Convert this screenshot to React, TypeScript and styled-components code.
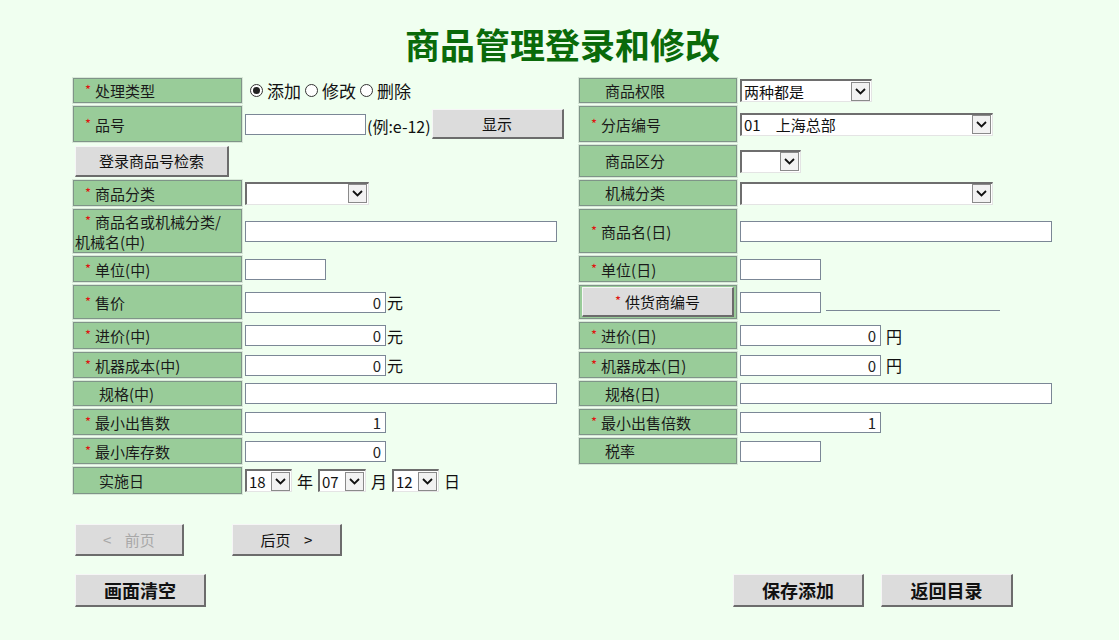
import React from 'react';
import styled, { createGlobalStyle } from 'styled-components';

const GlobalStyle = createGlobalStyle`
  html, body {
    margin: 0;
    padding: 0;
    background: #f0fff0;
  }
  body {
    font-family: "Noto Sans CJK SC", "Liberation Sans", sans-serif;
    font-size: 14px;
    color: #111;
  }
`;

const Page = styled.div`
  width: 1119px;
  height: 640px;
  overflow: hidden;
`;

const Title = styled.h1`
  margin: 22px 0 0;
  height: 50px;
  line-height: 44px;
  text-align: center;
  font-size: 35px;
  font-weight: 700;
  color: #0a6a0a;
  padding-left: 6px;
`;

const FormGrid = styled.div`
  margin: 6px 0 0 73px;
  display: grid;
  grid-template-columns: 169px 331px 158px 313px;
  grid-template-rows: 25px 36px 32px 26px 44px 26px 34px 27px 26px 25px 26px 26px 27px;
  gap: 3px;
`;

const LabelCell = styled.div<{ $plain?: boolean }>`
  box-sizing: border-box;
  background: #99cc99;
  border: 1px solid #7f9488;
  box-shadow: 0 0 0 1px #d8e8d8;
  display: flex;
  align-items: center;
  padding: 0 2px 0 1px;
  line-height: 20px;
  font-size: 15px;
  color: #1a1a1a;

  & > span.txt {
    text-indent: ${(p) => (p.$plain ? '24px' : '10px')};
  }
`;

const Star = styled.span`
  color: #e01010;
  font-size: 13px;
  margin-right: 4px;
  vertical-align: 2px;
  text-indent: 0;
`;

const FieldCell = styled.div`
  display: flex;
  align-items: center;
  font-size: 16px;
`;

const ButtonCell = styled.div`
  display: flex;
  align-items: center;
  padding-left: 2px;
`;

const PressCell = styled(LabelCell)`
  padding: 2px;
`;

const TextInput = styled.input<{ $w: number; $right?: boolean }>`
  box-sizing: border-box;
  width: ${(p) => p.$w}px;
  height: 21px;
  border: 1px solid #7b8796;
  background: #fff;
  padding: 0 4px;
  margin: 0;
  font-family: inherit;
  font-size: 15px;
  text-align: ${(p) => (p.$right ? 'right' : 'left')};
  color: #222;
  outline: none;
`;

const Unit = styled.span<{ $gap?: number }>`
  margin-left: ${(p) => p.$gap ?? 1}px;
  font-size: 16px;
`;

const Hint = styled.span`
  margin: 4px 1px 0 1px;
  font-size: 16px;
`;

const Underline = styled.span`
  width: 174px;
  height: 1px;
  background: #7b8796;
  margin: 16px 0 0 5px;
`;

const Button = styled.button<{ $w: number; $h?: number; $bold?: boolean }>`
  box-sizing: border-box;
  width: ${(p) => p.$w}px;
  height: ${(p) => p.$h ?? 31}px;
  background: #dcdcdc;
  border-top: 1px solid #f6f6f6;
  border-left: 1px solid #f6f6f6;
  border-right: 2px solid #6c6c6c;
  border-bottom: 2px solid #6c6c6c;
  padding: 0;
  margin: 0;
  font-family: inherit;
  font-size: ${(p) => (p.$bold ? '18px' : '15px')};
  font-weight: ${(p) => (p.$bold ? 700 : 400)};
  color: #111;
  cursor: pointer;

  &:disabled {
    color: #a8a8a8;
    cursor: default;
  }
`;

const RadioGroup = styled.div`
  display: flex;
  align-items: center;
  padding-left: 5px;
  font-size: 17px;
`;

const RadioItem = styled.label`
  display: flex;
  align-items: center;
  margin-right: 4px;
`;

const RadioDot = styled.span<{ $on?: boolean }>`
  box-sizing: border-box;
  width: 13px;
  height: 13px;
  border-radius: 50%;
  border: 1px solid #333;
  background: #fff;
  margin-right: 4px;
  display: flex;
  align-items: center;
  justify-content: center;

  &::after {
    content: '';
    width: 7px;
    height: 7px;
    border-radius: 50%;
    background: ${(p) => (p.$on ? '#222' : 'transparent')};
  }
`;

const SelectBox = styled.div<{ $w: number }>`
  box-sizing: border-box;
  width: ${(p) => p.$w}px;
  height: 23px;
  border-top: 2px solid #6e6e6e;
  border-left: 2px solid #6e6e6e;
  border-right: 1px solid #e4e4e4;
  border-bottom: 1px solid #e4e4e4;
  background: #fff;
  display: flex;
  align-items: center;
  justify-content: space-between;
  font-size: 15px;
  padding-left: 2px;
  white-space: pre;
`;

const SelectArrow = styled.span`
  box-sizing: border-box;
  width: 19px;
  height: 19px;
  margin-right: 1px;
  border: 1px solid #8a8a8a;
  background: #f2f2f2;
  display: flex;
  align-items: center;
  justify-content: center;
`;

const DateRow = styled.div`
  display: flex;
  align-items: center;
  font-size: 16px;
  gap: 5px;
`;

const BottomArea = styled.div`
  padding-left: 75px;
  margin-top: 30px;
`;

const NavRow = styled.div`
  display: flex;
  gap: 48px;
`;

const ActionRow = styled.div`
  display: flex;
  justify-content: space-between;
  width: 938px;
  margin-top: 18px;
`;

const ActionGroup = styled.div`
  display: flex;
  gap: 17px;
`;

const Chevron = () => (
  <svg width="11" height="7" viewBox="0 0 11 7">
    <path d="M1 1 L5.5 5.5 L10 1" fill="none" stroke="#111" strokeWidth="1.8" />
  </svg>
);

const Select = ({ w, value }: { w: number; value?: string }) => (
  <SelectBox $w={w}>
    <span>{value ?? ''}</span>
    <SelectArrow>
      <Chevron />
    </SelectArrow>
  </SelectBox>
);

const Label = ({ text, required }: { text: React.ReactNode; required?: boolean }) => (
  <LabelCell $plain={!required}>
    <span className="txt">
      {required && <Star>*</Star>}
      {text}
    </span>
  </LabelCell>
);

export default function App() {
  return (
    <Page>
      <GlobalStyle />
      <Title>商品管理登录和修改</Title>
      <FormGrid>
        <Label text="处理类型" required />
        <FieldCell>
          <RadioGroup>
            <RadioItem>
              <RadioDot $on />
              添加
            </RadioItem>
            <RadioItem>
              <RadioDot />
              修改
            </RadioItem>
            <RadioItem>
              <RadioDot />
              删除
            </RadioItem>
          </RadioGroup>
        </FieldCell>
        <Label text="商品权限" />
        <FieldCell>
          <Select w={132} value="两种都是" />
        </FieldCell>

        <Label text="品号" required />
        <FieldCell>
          <TextInput $w={121} />
          <Hint>(例:e-12)</Hint>
          <Button $w={132} $h={30}>显示</Button>
        </FieldCell>
        <Label text="分店编号" required />
        <FieldCell>
          <Select w={253} value={'01\u2002\u2002上海总部'} />
        </FieldCell>

        <ButtonCell>
          <Button $w={154} $h={31}>登录商品号检索</Button>
        </ButtonCell>
        <FieldCell />
        <Label text="商品区分" />
        <FieldCell>
          <Select w={61} />
        </FieldCell>

        <Label text="商品分类" required />
        <FieldCell>
          <Select w={124} />
        </FieldCell>
        <Label text="机械分类" />
        <FieldCell>
          <Select w={253} />
        </FieldCell>

        <Label
          text={
            <>
              商品名或机械分类/
              <br />
              机械名(中)
            </>
          }
          required
        />
        <FieldCell>
          <TextInput $w={312} />
        </FieldCell>
        <Label text="商品名(日)" required />
        <FieldCell>
          <TextInput $w={312} />
        </FieldCell>

        <Label text="单位(中)" required />
        <FieldCell>
          <TextInput $w={81} />
        </FieldCell>
        <Label text="单位(日)" required />
        <FieldCell>
          <TextInput $w={81} />
        </FieldCell>

        <Label text="售价" required />
        <FieldCell>
          <TextInput $w={141} $right defaultValue="0" />
          <Unit>元</Unit>
        </FieldCell>
        <PressCell>
          <Button $w={153} $h={30}>
            <Star>*</Star>供货商编号
          </Button>
        </PressCell>
        <FieldCell>
          <TextInput $w={81} />
          <Underline />
        </FieldCell>

        <Label text="进价(中)" required />
        <FieldCell>
          <TextInput $w={141} $right defaultValue="0" />
          <Unit>元</Unit>
        </FieldCell>
        <Label text="进价(日)" required />
        <FieldCell>
          <TextInput $w={141} $right defaultValue="0" />
          <Unit $gap={5}>円</Unit>
        </FieldCell>

        <Label text="机器成本(中)" required />
        <FieldCell>
          <TextInput $w={141} $right defaultValue="0" />
          <Unit>元</Unit>
        </FieldCell>
        <Label text="机器成本(日)" required />
        <FieldCell>
          <TextInput $w={141} $right defaultValue="0" />
          <Unit $gap={5}>円</Unit>
        </FieldCell>

        <Label text="规格(中)" />
        <FieldCell>
          <TextInput $w={312} />
        </FieldCell>
        <Label text="规格(日)" />
        <FieldCell>
          <TextInput $w={312} />
        </FieldCell>

        <Label text="最小出售数" required />
        <FieldCell>
          <TextInput $w={141} $right defaultValue="1" />
        </FieldCell>
        <Label text="最小出售倍数" required />
        <FieldCell>
          <TextInput $w={141} $right defaultValue="1" />
        </FieldCell>

        <Label text="最小库存数" required />
        <FieldCell>
          <TextInput $w={141} $right defaultValue="0" />
        </FieldCell>
        <Label text="税率" />
        <FieldCell>
          <TextInput $w={81} />
        </FieldCell>

        <Label text="实施日" />
        <FieldCell>
          <DateRow>
            <Select w={47} value="18" />
            <span>年</span>
            <Select w={48} value="07" />
            <span>月</span>
            <Select w={47} value="12" />
            <span>日</span>
          </DateRow>
        </FieldCell>
        <div />
        <div />
      </FormGrid>

      <BottomArea>
        <NavRow>
          <Button $w={109} $h={32} disabled>
            &lt;&nbsp;&nbsp;&nbsp;&nbsp;前页
          </Button>
          <Button $w={110} $h={32}>
            后页&nbsp;&nbsp;&nbsp;&nbsp;&gt;
          </Button>
        </NavRow>
        <ActionRow>
          <Button $w={131} $h={33} $bold>画面清空</Button>
          <ActionGroup>
            <Button $w={131} $h={33} $bold>保存添加</Button>
            <Button $w={132} $h={33} $bold>返回目录</Button>
          </ActionGroup>
        </ActionRow>
      </BottomArea>
    </Page>
  );
}
